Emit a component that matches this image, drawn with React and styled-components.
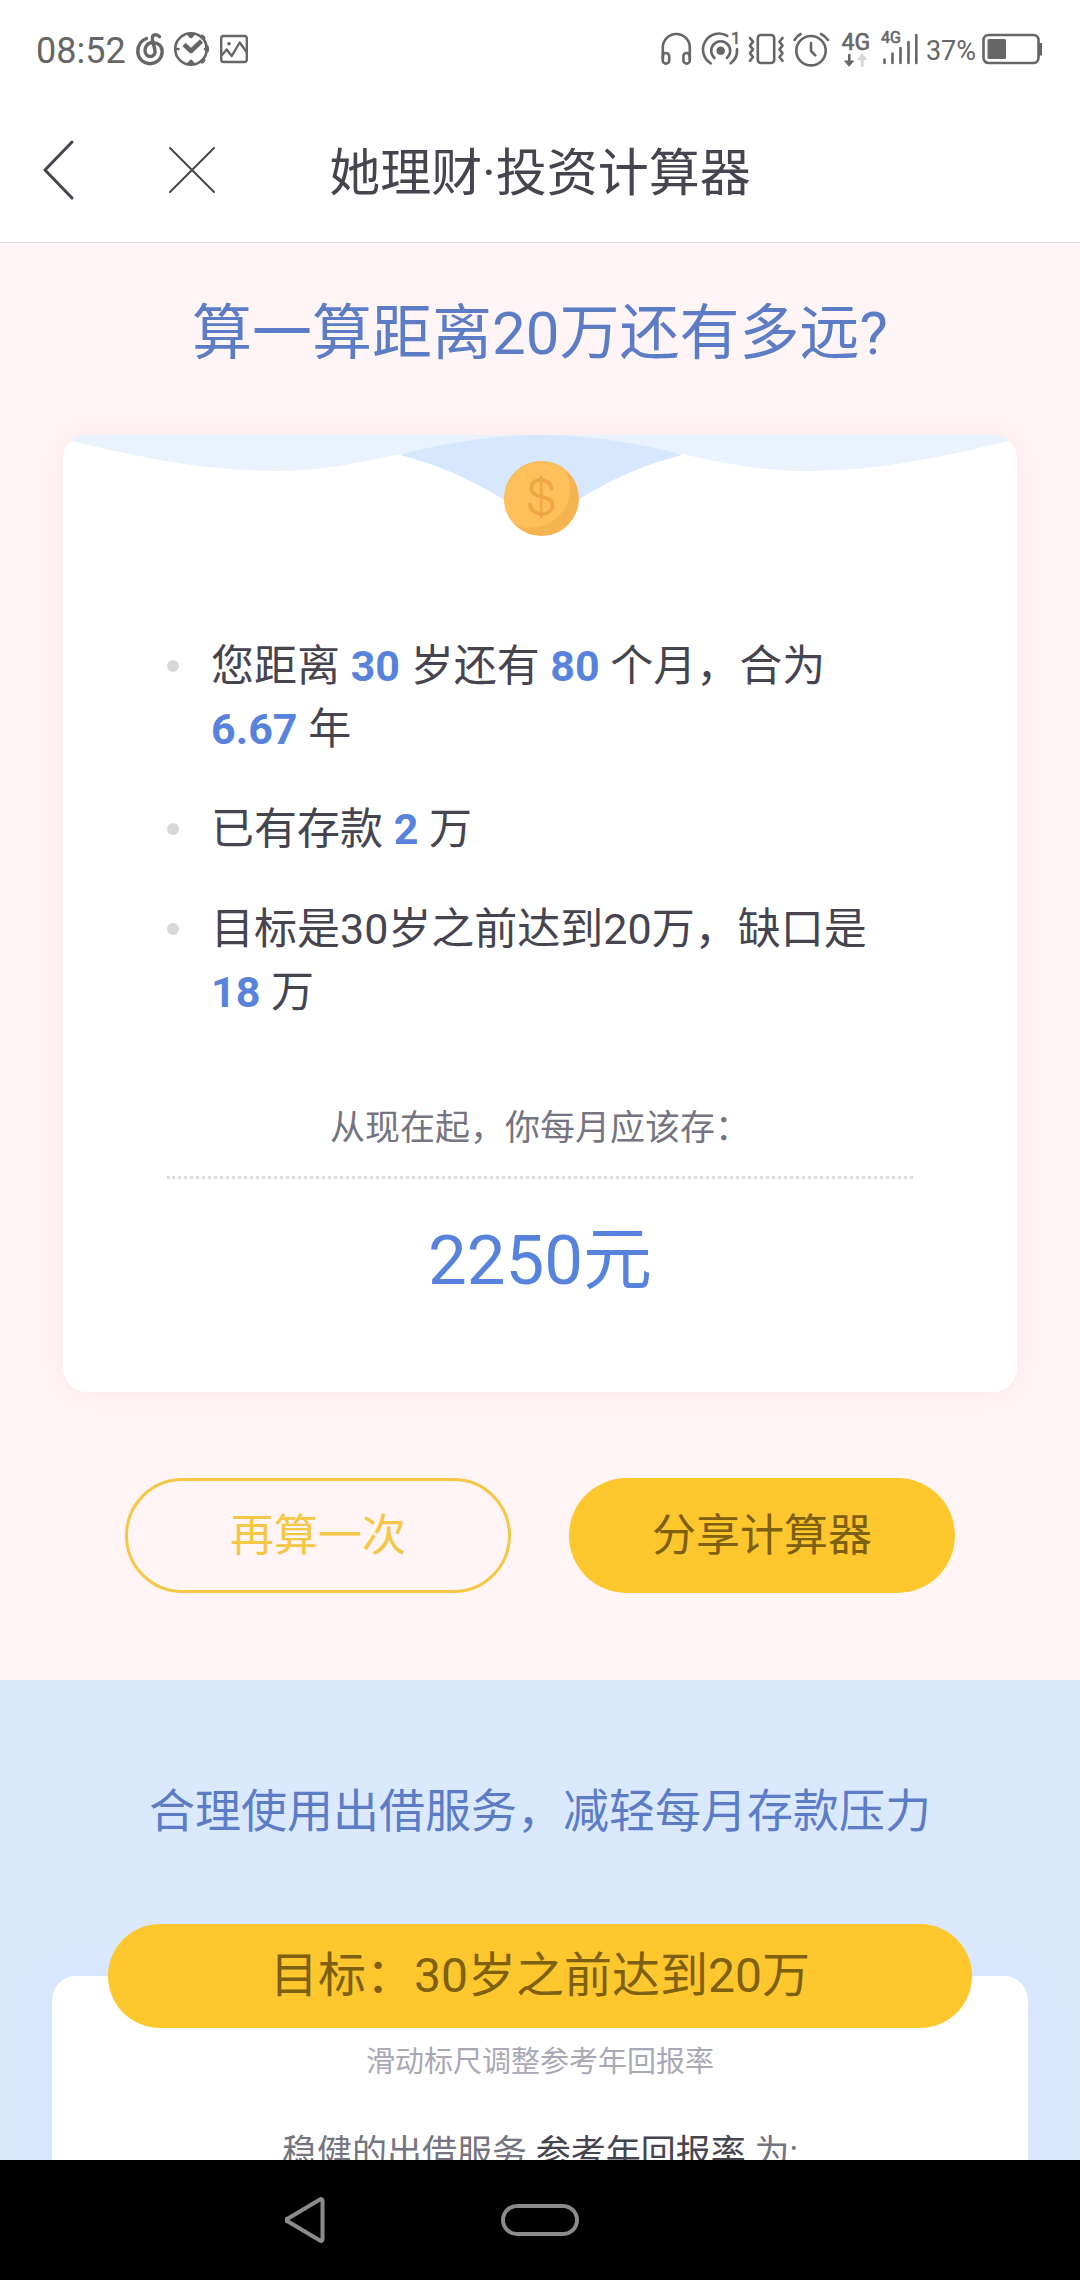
import styled, { createGlobalStyle, css } from 'styled-components';

const GlobalStyle = createGlobalStyle`
  *,
  *::before,
  *::after {
    box-sizing: border-box;
    margin: 0;
    padding: 0;
  }

  body {
    font-family: Roboto, 'Noto Sans CJK SC', sans-serif;
    color: #45444f;
    background-color: #fff;
  }

  button {
    font-family: inherit;
    background: none;
    border: none;
    cursor: pointer;
  }
`;

const Screen = styled.div`
  height: 100vh;
  display: flex;
  flex-direction: column;
`;

const StatusBar = styled.div`
  flex: none;
  height: 98px;
  padding: 0 38px 0 36px;
  display: flex;
  align-items: center;
  justify-content: space-between;
  color: #666;
`;

const StatusGroup = styled.div`
  display: flex;
  align-items: center;
  gap: ${(props) => props.$gap}px;
`;

const Time = styled.time`
  font-size: 36px;
  line-height: 36px;
  padding-top: 4px;
`;

const Percent = styled.span`
  font-size: 27px;
  line-height: 36px;
  padding-top: 4px;
`;

const StatusSvg = styled.svg`
  display: block;
  height: 36px;
  overflow: visible;
  fill: none;
  stroke: currentColor;
  stroke-width: 2.6;
  stroke-linecap: round;
  stroke-linejoin: round;

  text {
    font-family: Roboto, sans-serif;
    fill: currentColor;
    stroke-width: 0.6;
  }
`;

const AppBar = styled.header`
  flex: none;
  height: 145px;
  padding: 0 42px;
  display: grid;
  grid-template-columns: 1fr auto 1fr;
  align-items: center;
  border-bottom: 1px solid #dfdde1;
`;

const AppBarActions = styled.div`
  display: flex;
  align-items: center;
  gap: 92px;
`;

const IconButton = styled.button`
  display: block;
  color: #45444f;

  svg {
    display: block;
    fill: none;
    stroke: currentColor;
    stroke-linecap: round;
    stroke-linejoin: round;
  }
`;

const PageTitle = styled.h1`
  padding-top: 8px;
  font-size: 51px;
  font-weight: 400;
  line-height: 72px;
`;

const Main = styled.main`
  flex: 1;
  min-height: 0;
  overflow: hidden;
`;

const ResultSection = styled.section`
  padding: 47px 63px 87px;
  background-color: #fff5f7;
`;

const Heading = styled.h2`
  font-size: 60px;
  font-weight: 400;
  line-height: 88px;
  text-align: center;
  color: #5c7dc6;
`;

const ResultCard = styled.div`
  margin-top: 57px;
  padding-bottom: 81px;
  border-radius: 24px;
  background-color: #fff;
  box-shadow: 0 0 30px #ffe6e8;
  overflow: hidden;
`;

const Wave = styled.svg`
  display: block;
  width: 100%;
`;

const CardBody = styled.div`
  padding: 97px 104px 0;
`;

const FactList = styled.ul`
  list-style: none;
  display: flex;
  flex-direction: column;
  gap: 37px;
`;

const Fact = styled.li`
  display: grid;
  grid-template-columns: 12px 1fr;
  column-gap: 32px;
  font-size: 43px;
  line-height: 63px;

  &::before {
    content: '';
    width: 12px;
    height: 12px;
    margin-top: 25px;
    border-radius: 50%;
    background-color: #d8d8d8;
  }
`;

const Value = styled.strong`
  font-weight: 700;
  color: #5783dd;
`;

const Caption = styled.p`
  margin-top: 80px;
  padding-bottom: 22px;
  font-size: 35px;
  line-height: 50px;
  text-align: center;
  color: #757480;
  border-bottom: 3px dotted #dcdcdc;
`;

const Amount = styled.p`
  margin-top: 32px;
  font-size: 69px;
  line-height: 100px;
  text-align: center;
  color: #5783dd;
`;

const Actions = styled.div`
  margin-top: 86px;
  padding: 0 62px;
  display: grid;
  grid-template-columns: 1fr 1fr;
  gap: 58px;
`;

const Button = styled.button`
  height: 115px;
  border-radius: 58px;
  font-size: 44px;
  line-height: 64px;

  ${(props) =>
    props.$outlined
      ? css`
          color: #f6c744;
          border: 3px solid #f6c744;
        `
      : css`
          color: #7d6010;
          background-color: #ffc72e;
        `}
`;

const ServiceSection = styled.section`
  padding: 97px 52px 0;
  background-color: #dbe9ff;
`;

const SubHeading = styled.h2`
  font-size: 46px;
  font-weight: 400;
  line-height: 68px;
  text-align: center;
  color: #5c7dc6;
`;

const ServiceCard = styled.div`
  margin-top: 131px;
  padding: 0 56px 100px;
  border-radius: 24px;
  background-color: #fff;
  box-shadow: 0 0 30px #cfe2ff;
  text-align: center;
  display: flow-root;
`;

const Goal = styled.p`
  margin-top: -52px;
  border-radius: 52px;
  font-size: 48px;
  line-height: 104px;
  color: #7d6010;
  background-color: #ffc72e;
`;

const Hint = styled.p`
  margin-top: 12px;
  font-size: 29px;
  line-height: 44px;
  color: #a9a8b6;
`;

const RateLine = styled.p`
  margin-top: 45px;
  font-size: 35px;
  line-height: 50px;
  color: #757480;
`;

const RateName = styled.span`
  color: #45444f;
`;

const NavBar = styled.nav`
  flex: none;
  height: 120px;
  display: grid;
  grid-template-columns: repeat(3, 1fr);
  justify-items: center;
  align-items: center;
  padding: 0 188px;
  background-color: #000;
`;

const NavButton = styled(IconButton)`
  color: #8b8b8b;
`;

function NotificationIcons() {
  return (
    <>
      <StatusSvg width="28" viewBox="0 0 28 36">
        <path
          strokeWidth="3.4"
          d="M10.5 7.5C5 9.5 1.8 14.5 1.8 20.5a12.2 12.2 0 0 0 24.4 0c0-6-4.7-9-9.2-9-5.5 0-8 4-8 8 0 3.5 2.5 6 5 6 3.5 0 5.8-3 5-6L16.5 9c-.8-4 .9-5.3 3-5.3 2 0 3 .9 4 2"
        />
      </StatusSvg>
      <StatusSvg width="36" viewBox="0 0 36 36">
        <circle cx="17" cy="18" r="15.8" />
        <path d="M14.5 3.5h5L17 6zM14.5 32.5h5L17 30z" fill="currentColor" />
        <path d="M2 18h2.5M31 18h3" />
        <path d="M28 5.5l1.5 1.5M28 30.5l1.5-1.5M33 16.5v3" strokeWidth="4" />
        <path d="M10 13.5l7 6.5 10.500-10" strokeWidth="4.5" strokeLinecap="butt" />
      </StatusSvg>
      <StatusSvg width="28" viewBox="0 0 28 36">
        <rect x="1.2" y="5" width="25.6" height="26" rx="2.5" strokeWidth="2.4" />
        <path strokeWidth="2.4" d="M2 24l4.7-5.5 5 6.5 8-13.5 6.5 9" />
        <circle cx="9" cy="12.7" r="1.8" fill="currentColor" stroke="none" />
      </StatusSvg>
    </>
  );
}

function RadioIcons() {
  return (
    <>
      <StatusSvg width="36" viewBox="0 0 36 36">
        <path d="M3.8 28V16.5a13.5 13.5 0 0 1 27 0V28" />
        <rect x="3.8" y="22" width="6.4" height="10.6" rx="3.2" />
        <rect x="24.4" y="22" width="6.4" height="10.6" rx="3.2" />
      </StatusSvg>
      <StatusSvg width="37" viewBox="0 0 37 36">
        <circle cx="17.7" cy="19.7" r="4.3" fill="currentColor" stroke="none" />
        <path d="M11.5 27a9.5 9.5 0 1 1 12.4 0" />
        <path d="M7.7 32.3A16 16 0 0 1 24.3 4.9M34 18a16 16 0 0 1-6.3 14.3" />
        <text x="28" y="13" fontSize="17">
          1
        </text>
      </StatusSvg>
      <StatusSvg width="37" viewBox="0 0 37 36">
        <rect x="9.8" y="4" width="16.4" height="28" rx="3" />
        <path d="M2 7l3 3.8-3 3.8 3 3.8-3 3.8 3 3.8-3 3.8M34.5 7l-3 3.8 3 3.8-3 3.8 3 3.8-3 3.8 3 3.8" />
      </StatusSvg>
      <StatusSvg width="39" viewBox="0 0 39 36">
        <circle cx="18" cy="19.7" r="14.7" />
        <path d="M18 12v8l4.3 4.3M1.5 9Q4 5 7.7 3M28 3q4 2 7 6" />
      </StatusSvg>
      <StatusSvg width="33" viewBox="0 0 33 36">
        <text x="1.5" y="18.5" fontSize="23">
          4G
        </text>
        <path d="M9.3 24v6" />
        <path d="M5 30h8.6l-4.3 5z" fill="currentColor" strokeWidth="1" />
        <g color="#d6d6d6">
          <path d="M22.3 35v-6" stroke="currentColor" />
          <path
            d="M18 28.5h8.6L22.3 23z"
            fill="currentColor"
            stroke="currentColor"
            strokeWidth="1"
          />
        </g>
      </StatusSvg>
      <StatusSvg width="37" viewBox="0 0 37 36">
        <text x="0" y="12.3" fontSize="16">
          4G
        </text>
        <path d="M3.5 28.5V32M11.5 22.5V32M19.5 17V32M27.5 11V32M35.3 4V32" />
      </StatusSvg>
    </>
  );
}

function BatteryIcon() {
  return (
    <StatusSvg width="58" viewBox="2 0 58 36">
      <rect x="1.5" y="4" width="55" height="28" rx="5" />
      <rect x="5.5" y="8" width="18.5" height="20" rx="1.5" fill="currentColor" stroke="none" />
      <rect x="57" y="12" width="3" height="12.5" fill="currentColor" stroke="none" />
    </StatusSvg>
  );
}

function CardWave() {
  return (
    <Wave viewBox="0 0 954 103" aria-hidden="true">
      <path
        fill="#d7e7fe"
        d="M337 20C400 36 445 66 478 90C511 66 556 36 619 20L560 0H396Z"
      />
      <path
        fill="#eaf2fe"
        d="M0 0V4C70 21 140 36 211 36C310 36 370 0 478 0C586 0 646 36 745 36C816 36 884 21 954 4V0Z"
      />
      <circle cx="478.5" cy="63.5" r="37.5" fill="#f5b44f" />
      <path
        fill="#ffbf5b"
        d="M502 34.5A37.5 37.5 0 0 0 450.5 88.5A39 39 0 0 0 502 34.5Z"
      />
      <path
        fill="none"
        stroke="#f0a741"
        strokeWidth="3.8"
        strokeLinecap="round"
        d="M488.5 53.5C487 42 468.5 42 468.5 53C468.5 65 489.5 59 489.5 70.5C489.5 82 468 82 467 69.5"
      />
      <path
        fill="none"
        stroke="#f0a741"
        strokeWidth="2.6"
        strokeLinecap="round"
        d="M478.2 42V82"
      />
    </Wave>
  );
}

function App() {
  return (
    <Screen>
      <GlobalStyle />
      <StatusBar>
        <StatusGroup $gap={10}>
          <Time>08:52</Time>
          <NotificationIcons />
        </StatusGroup>
        <StatusGroup $gap={8}>
          <RadioIcons />
          <Percent>37%</Percent>
          <BatteryIcon />
        </StatusGroup>
      </StatusBar>

      <AppBar>
        <AppBarActions>
          <IconButton aria-label="返回">
            <svg width="34" height="60" viewBox="0 0 34 60" strokeWidth="3">
              <path d="M30 2L3 30l27 28" />
            </svg>
          </IconButton>
          <IconButton aria-label="关闭">
            <svg width="48" height="48" viewBox="0 0 48 48" strokeWidth="2">
              <path d="M2 2l44 44M46 2L2 46" />
            </svg>
          </IconButton>
        </AppBarActions>
        <PageTitle>她理财·投资计算器</PageTitle>
      </AppBar>

      <Main>
        <ResultSection>
          <Heading>算一算距离20万还有多远?</Heading>
          <ResultCard>
            <CardWave />
            <CardBody>
              <FactList>
                <Fact>
                  <p>
                    您距离 <Value>30</Value> 岁还有 <Value>80</Value> 个月，合为{' '}
                    <Value>6.67</Value> 年
                  </p>
                </Fact>
                <Fact>
                  <p>
                    已有存款 <Value>2</Value> 万
                  </p>
                </Fact>
                <Fact>
                  <p>
                    目标是30岁之前达到20万，缺口是 <Value>18</Value> 万
                  </p>
                </Fact>
              </FactList>
              <Caption>从现在起，你每月应该存：</Caption>
              <Amount>2250元</Amount>
            </CardBody>
          </ResultCard>
          <Actions>
            <Button $outlined>再算一次</Button>
            <Button>分享计算器</Button>
          </Actions>
        </ResultSection>

        <ServiceSection>
          <SubHeading>合理使用出借服务，减轻每月存款压力</SubHeading>
          <ServiceCard>
            <Goal>目标：30岁之前达到20万</Goal>
            <Hint>滑动标尺调整参考年回报率</Hint>
            <RateLine>
              稳健的出借服务 <RateName>参考年回报率</RateName> 为:
            </RateLine>
          </ServiceCard>
        </ServiceSection>
      </Main>

      <NavBar>
        <NavButton aria-label="后退">
          <svg width="40" height="48" viewBox="0 0 40 48" strokeWidth="4">
            <path d="M35 3.5a1.5 1.5 0 0 1 2.5 1v39a1.5 1.5 0 0 1-2.5 1L3 25.5a1.5 1.5 0 0 1 0-3z" />
          </svg>
        </NavButton>
        <NavButton aria-label="主屏幕">
          <svg width="78" height="32" viewBox="0 0 78 32" strokeWidth="4">
            <rect x="2" y="2" width="74" height="28" rx="14" />
          </svg>
        </NavButton>
      </NavBar>
    </Screen>
  );
}

export default App;
